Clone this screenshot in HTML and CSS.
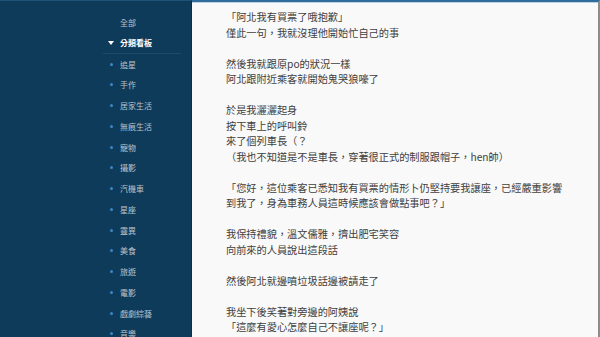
FILE: index.html
```html
<!DOCTYPE html>
<html lang="zh-Hant">
<head>
    <meta charset="UTF-8">
    <meta name="viewport" content="width=device-width, initial-scale=1.0">
    <title>分類看板</title>
    <link rel="stylesheet" href="styles.css">
</head>
<body>
    <div class="layout">
        <nav class="sidebar">
            <ul class="menu">
                <li class="menu-item"><span class="marker"></span>全部</li>
                <li class="menu-item menu-header"><span class="marker"><span class="caret"></span></span>分類看板</li>
                <li class="menu-item"><span class="marker"><span class="dot"></span></span>追星</li>
                <li class="menu-item"><span class="marker"><span class="dot"></span></span>手作</li>
                <li class="menu-item"><span class="marker"><span class="dot"></span></span>居家生活</li>
                <li class="menu-item"><span class="marker"><span class="dot"></span></span>無痕生活</li>
                <li class="menu-item"><span class="marker"><span class="dot"></span></span>寵物</li>
                <li class="menu-item"><span class="marker"><span class="dot"></span></span>攝影</li>
                <li class="menu-item"><span class="marker"><span class="dot"></span></span>汽機車</li>
                <li class="menu-item"><span class="marker"><span class="dot"></span></span>星座</li>
                <li class="menu-item"><span class="marker"><span class="dot"></span></span>靈異</li>
                <li class="menu-item"><span class="marker"><span class="dot"></span></span>美食</li>
                <li class="menu-item"><span class="marker"><span class="dot"></span></span>旅遊</li>
                <li class="menu-item"><span class="marker"><span class="dot"></span></span>電影</li>
                <li class="menu-item"><span class="marker"><span class="dot"></span></span>戲劇綜藝</li>
                <li class="menu-item"><span class="marker"><span class="dot"></span></span>音樂</li>
            </ul>
        </nav>

        <main class="content">
            <div class="post">
                <p>「阿北我有買票了哦抱歉」<br>僅此一句，我就沒理他開始忙自己的事</p>
                <p>然後我就跟原po的狀況一樣<br>阿北跟附近乘客就開始鬼哭狼嚎了</p>
                <p>於是我灑灑起身<br>按下車上的呼叫鈴<br>來了個列車長（？<br>（我也不知道是不是車長，穿著很正式的制服跟帽子，hen帥）</p>
                <p>「您好，這位乘客已悉知我有買票的情形卜仍堅持要我讓座，已經嚴重影響<br>到我了，身為車務人員這時候應該會做點事吧？」</p>
                <p>我保持禮貌，溫文儒雅，擠出肥宅笑容<br>向前來的人員說出這段話</p>
                <p>然後阿北就邊噴垃圾話邊被請走了</p>
                <p>我坐下後笑著對旁邊的阿姨說<br>「這麼有愛心怎麼自己不讓座呢？」</p>
            </div>
        </main>
    </div>
</body>
</html>
```

FILE: styles.css
```css
html, body {
    margin: 0;
    padding: 0;
    height: 100%;
}
body {
    font-family: "Noto Sans CJK TC", "Noto Sans", sans-serif;
    background: #f9f9f9;
    overflow: hidden;
}
.layout {
    display: flex;
    height: 337px;
}
.sidebar {
    width: 192px;
    flex-shrink: 0;
    background: #0f3b5b;
    border-top: 1px solid #1f5277;
    border-right: 1px solid #0a2f4b;
    box-sizing: border-box;
    padding: 11px 10px 0 103px;
}
.menu {
    list-style: none;
    margin: 0;
    padding: 0;
}
.menu-item {
    display: flex;
    align-items: center;
    height: 20.75px;
    padding-left: 6px;
    font-size: 8px;
    color: #b7c3ce;
    white-space: nowrap;
}
.menu-header {
    color: #ffffff;
    font-weight: bold;
    border-bottom: 1px solid #1d4b6d;
    height: 20px;
}
.marker {
    width: 11px;
    display: flex;
    align-items: center;
}
.dot {
    width: 3px;
    height: 3px;
    border-radius: 50%;
    background: #3d86c6;
    margin-left: 1px;
}
.caret {
    width: 0;
    height: 0;
    border-left: 3px solid transparent;
    border-right: 3px solid transparent;
    border-top: 4px solid #ffffff;
    margin-left: -1px;
}
.content {
    flex: 1;
    background: #f9f9f9;
    border-top: 2px solid #2f6b9b;
    box-shadow: inset 0 1px 0 #b9d2e6;
    border-right: 2px solid #8c8c8c;
    padding: 7px 0 0 34px;
}
.post {
    font-size: 10.2px;
    line-height: 15.5px;
    color: #404040;
}
.post p {
    margin: 0 0 15.5px;
}
```
